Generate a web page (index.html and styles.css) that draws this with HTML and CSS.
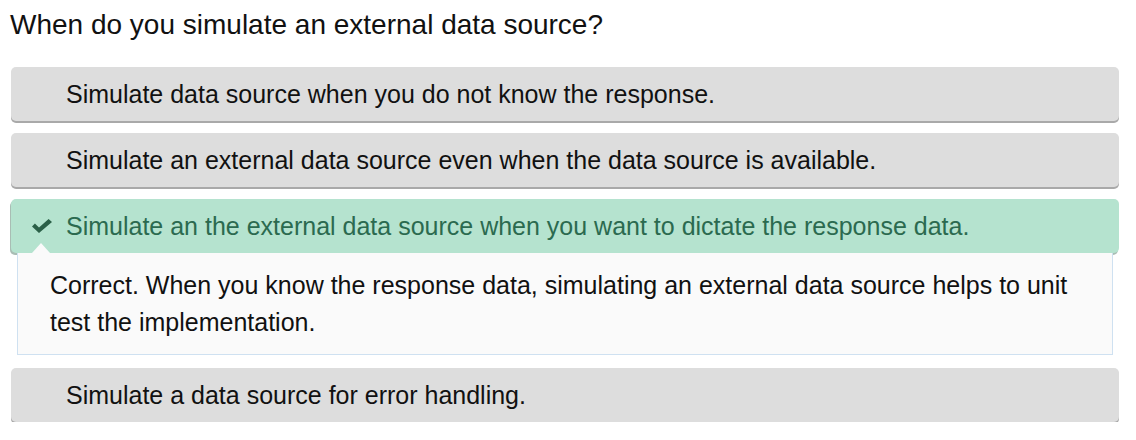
FILE: index.html
```html
<!DOCTYPE html>
<html>
<head>
<meta charset="utf-8">
<link rel="stylesheet" href="styles.css">
</head>
<body>
<div class="quiz">
  <div class="question">When do you simulate an external data source?</div>
  <div class="options">
    <div class="option">Simulate data source when you do not know the response.</div>
    <div class="option">Simulate an external data source even when the data source is available.</div>
    <div class="answer-group">
      <div class="option correct">
        <svg class="check" viewBox="0 0 20 14" width="20" height="14"><path d="M0 7.4 L2.9 4.5 L7 8.6 L16.6 0 L20 3.1 L7 14 Z" fill="#2b6048"/></svg>
        <span>Simulate an the external data source when you want to dictate the response data.</span>
      </div>
      <div class="feedback">
        <span class="notch"></span>
        Correct. When you know the response data, simulating an external data source helps to unit test the implementation.
      </div>
    </div>
    <div class="option">Simulate a data source for error handling.</div>
  </div>
</div>
</body>
</html>
```

FILE: styles.css
```css
html, body {
  margin: 0;
  padding: 0;
  background: #ffffff;
}
body {
  font-family: "Liberation Sans", Arial, sans-serif;
  color: #111111;
}
.quiz {
  padding: 8px 17px 0 10px;
}
.question {
  font-size: 28px;
  line-height: 34px;
  margin-bottom: 25px;
}
.options {
  display: flex;
  flex-direction: column;
  gap: 12px;
  padding-left: 1px;
}
.option {
  background: #dddddd;
  border-radius: 5px;
  box-shadow: 0 2px 0 #a9a9a9;
  height: 54px;
  box-sizing: border-box;
  display: flex;
  align-items: center;
  padding-left: 55px;
  font-size: 25px;
  color: #111111;
}
.answer-group {
  display: flex;
  flex-direction: column;
  margin-bottom: 1px;
}
.option.correct {
  background: #b5e3cf;
  color: #2b6a4f;
  padding-left: 21px;
  gap: 14px;
  box-shadow: -1px 2px 0 #a9bdb4;
}
.check {
  flex: none;
}
.feedback {
  position: relative;
  margin: 0 6px;
  background: #fafafa;
  border: 1px solid #cfe1f1;
  border-top: none;
  padding: 14px 32px 13px 32px;
  font-size: 25px;
  line-height: 37px;
  color: #111111;
}
.notch {
  position: absolute;
  left: 14px;
  top: -10px;
  width: 0;
  height: 0;
  border-left: 9px solid transparent;
  border-right: 9px solid transparent;
  border-bottom: 10px solid #fafafa;
}
```
